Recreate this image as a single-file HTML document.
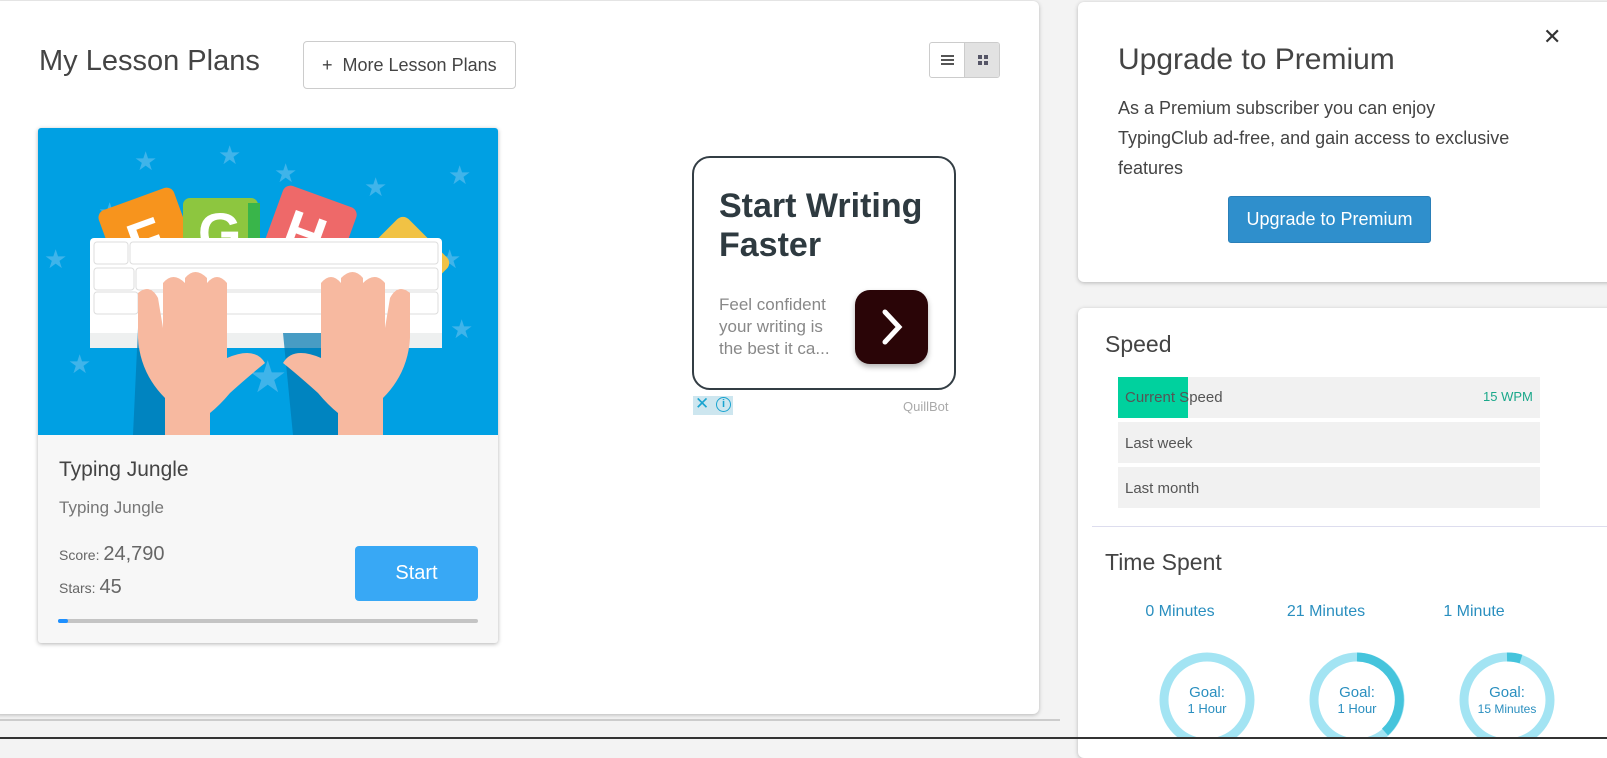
<!DOCTYPE html>
<html><head><meta charset="utf-8"><style>
*{box-sizing:border-box;margin:0;padding:0}
body{width:1607px;height:739px;overflow:hidden;background:#f3f3f3;font-family:"Liberation Sans",Arial,sans-serif;position:relative;color:#444}
.panel{position:absolute;background:#fff;border-radius:6px;box-shadow:0 1px 4px rgba(0,0,0,.25)}
.abs{position:absolute}
</style></head><body>
<div class="panel" style="left:-6px;top:1px;width:1045px;height:713px"></div>
<div class="abs" style="left:39px;top:45px;font-size:29px;color:#444">My Lesson Plans</div>
<div class="abs" style="left:303px;top:41px;width:213px;height:48px;border:1px solid #ccc;border-radius:4px;font-size:18px;color:#444;line-height:46px;padding-left:18px">+&nbsp; More Lesson Plans</div>
<div class="abs" style="left:929px;top:42px;width:71px;height:36px;border:1px solid #ccc;border-radius:3px;overflow:hidden;background:#fff">
 <div class="abs" style="left:34px;top:0;width:37px;height:36px;background:#e2e2e2;border-left:1px solid #ccc"></div>
 <div class="abs" style="left:11px;top:12px;width:13px;height:2px;background:#555;box-shadow:0 4px 0 #555,0 8px 0 #555"></div>
 <div class="abs" style="left:48px;top:12px;width:4px;height:4px;background:#556;box-shadow:6px 0 0 #556,0 6px 0 #556,6px 6px 0 #556"></div>
</div>
<!-- card -->
<div class="abs" style="left:38px;top:128px;width:460px;height:515px;background:#f7f7f7;border-radius:3px;box-shadow:0 1px 4px rgba(0,0,0,.3);overflow:hidden">
<svg width="460" height="307" viewBox="0 0 460 307" style="display:block">
<rect width="460" height="307" fill="#00a0e3"/>
<g fill="#3fb4ea" font-size="26" font-family="DejaVu Sans"><text x="180" y="36">★</text><text x="96" y="42">★</text><text x="236" y="54">★</text><text x="326" y="68">★</text><text x="410" y="56">★</text><text x="60" y="93">★</text><text x="6" y="140">★</text><text x="400" y="140">★</text><text x="412" y="210">★</text><text x="30" y="245">★</text><text x="210" y="264" font-size="44">★</text></g>
<g transform="rotate(-20 105 105)"><rect x="68" y="70" width="80" height="80" rx="8" fill="#f7941d"/><text x="88" y="132" fill="#fff" font-size="56" font-weight="bold">F</text></g>
<rect x="145" y="70" width="75" height="70" rx="7" fill="#8dc63f"/><rect x="210" y="75" width="12" height="65" fill="#39b54a"/><text x="160" y="124" fill="#fff" font-size="56" font-weight="bold">G</text>
<g transform="rotate(20 270 105)"><rect x="232" y="66" width="78" height="78" rx="8" fill="#ee6969"/><text x="247" y="126" fill="#fff" font-size="56" font-weight="bold">H</text></g>
<g transform="rotate(45 365 135)"><rect x="330" y="100" width="70" height="70" rx="8" fill="#f1c244"/></g>
<rect x="52" y="110" width="352" height="110" rx="4" fill="#fff"/><rect x="52" y="205" width="352" height="15" fill="#eef0f0"/>
<g fill="#fff" stroke="#ddd"><rect x="56" y="114" width="34" height="22" rx="3"/><rect x="92" y="114" width="308" height="22" rx="3"/><rect x="56" y="140" width="40" height="22" rx="3"/><rect x="98" y="140" width="302" height="22" rx="3"/><rect x="56" y="164" width="44" height="22" rx="3"/><rect x="102" y="164" width="298" height="22" rx="3"/></g>
<path d="M100 200 L160 200 L165 307 L95 307Z" fill="#0077b0" opacity=".7"/>
<path d="M245 205 L300 205 L312 307 L255 307Z" fill="#0077b0" opacity=".7"/>
<g fill="#f7b9a0"><path d="M100 165 q12-10 20 5 l5 30 v-45 q10-12 22 0 v45 v-50 q10-12 22 0 v50 v-45 q10-12 20 0 v75 q28-12 38 5 q-15 12-35 30 q-10 12-20 20 v75 h-45 v-90 q-25-25-27-60Z"/>
<path d="M372 165 q-12-10-20 5 l-5 30 v-45 q-10-12-22 0 v45 v-50 q-10-12-22 0 v50 v-45 q-10-12-20 0 v75 q-28-12-38 5 q15 12 35 30 q10 12 20 20 v75 h45 v-90 q25-25 27-60Z"/></g>
</svg>
<div class="abs" style="left:21px;top:330px;font-size:21px;color:#444">Typing Jungle</div>
<div class="abs" style="left:21px;top:370px;font-size:17px;color:#777">Typing Jungle</div>
<div class="abs" style="left:21px;top:415px;font-size:14px;color:#666">Score: <span style="font-size:20px">24,790</span></div>
<div class="abs" style="left:21px;top:448px;font-size:14px;color:#666">Stars: <span style="font-size:20px">45</span></div>
<div class="abs" style="left:317px;top:418px;width:123px;height:55px;background:#38a8f5;border-radius:4px;color:#fff;font-size:20px;text-align:center;line-height:54px">Start</div>
<div class="abs" style="left:20px;top:491px;width:420px;height:4px;background:#c4c4c4;border-radius:2px"><div style="width:10px;height:4px;background:#1e90ff;border-radius:2px"></div></div>
</div>
<!-- ad -->
<div class="abs" style="left:692px;top:156px;width:264px;height:234px;border:2px solid #333d44;border-radius:18px;background:#fff"></div>
<div class="abs" style="left:719px;top:187px;font-size:34px;font-weight:bold;color:#2e3a40;line-height:39px">Start Writing<br>Faster</div>
<div class="abs" style="left:719px;top:294px;font-size:17px;color:#888;line-height:22px">Feel confident<br>your writing is<br>the best it ca...</div>
<div class="abs" style="left:855px;top:290px;width:73px;height:74px;background:#2a0507;border-radius:15px;box-shadow:0 3px 6px rgba(0,0,0,.3)"><svg width="73" height="74"><path d="M30 22 L44 37 L30 52" stroke="#fff" stroke-width="5" fill="none" stroke-linecap="round"/></svg></div>
<div class="abs" style="left:693px;top:396px;width:40px;height:19px;background:#cde6ef"></div>
<div class="abs" style="left:695px;top:394px;color:#19a4d0;font-size:17px">✕</div>
<div class="abs" style="left:716px;top:397px;width:15px;height:15px;border:1.5px solid #19a4d0;border-radius:50%;color:#19a4d0;font-size:11px;text-align:center;line-height:12px;font-weight:bold">i</div>
<div class="abs" style="left:903px;top:399px;font-size:13px;color:#aaa">QuillBot</div>
<!-- right top -->
<div class="panel" style="left:1078px;top:2px;width:540px;height:280px"></div>
<div class="abs" style="left:1543px;top:24px;font-size:22px;color:#333">✕</div>
<div class="abs" style="left:1118px;top:43px;font-size:30px;color:#444">Upgrade to Premium</div>
<div class="abs" style="left:1118px;top:93px;font-size:18px;color:#444;line-height:30px;width:405px">As a Premium subscriber you can enjoy TypingClub ad-free, and gain access to exclusive features</div>
<div class="abs" style="left:1228px;top:196px;width:203px;height:47px;background:#2f8fcc;border:1px solid #2a7fb8;border-radius:3px;color:#fff;font-size:18px;text-align:center;line-height:45px">Upgrade to Premium</div>
<!-- right bottom -->
<div class="panel" style="left:1078px;top:308px;width:540px;height:450px"></div>
<div class="abs" style="left:1105px;top:331px;font-size:23px;color:#444">Speed</div>
<div class="abs" style="left:1118px;top:377px;width:422px;height:41px;background:#f1f1f1"><div style="width:70px;height:41px;background:#00d19e"></div></div>
<div class="abs" style="left:1125px;top:389px;font-size:15px;color:#555">Current Speed</div>
<div class="abs" style="left:1483px;top:389px;font-size:13px;color:#1aa88a">15 WPM</div>
<div class="abs" style="left:1118px;top:422px;width:422px;height:41px;background:#f1f1f1;font-size:15px;color:#555;padding:13px 7px">Last week</div>
<div class="abs" style="left:1118px;top:467px;width:422px;height:41px;background:#f1f1f1;font-size:15px;color:#555;padding:13px 7px">Last month</div>
<div class="abs" style="left:1092px;top:526px;width:515px;height:1px;background:#dde"></div>
<div class="abs" style="left:1105px;top:549px;font-size:23px;color:#444">Time Spent</div>
<div class="abs" style="left:1130px;top:603px;width:100px;text-align:center;font-size:16px;color:#2a8fbf">0 Minutes</div>
<div class="abs" style="left:1276px;top:603px;width:100px;text-align:center;font-size:16px;color:#2a8fbf">21 Minutes</div>
<div class="abs" style="left:1424px;top:603px;width:100px;text-align:center;font-size:16px;color:#2a8fbf">1 Minute</div>
<svg class="abs" style="left:1080px;top:630px" width="527" height="109">
<g fill="none" stroke-width="9"><circle cx="127" cy="70" r="43" stroke="#a3e4f3"/><circle cx="277" cy="70" r="43" stroke="#a3e4f3"/><circle cx="427" cy="70" r="43" stroke="#a3e4f3"/>
<path d="M277 27 A43 43 0 0 1 305 102" stroke="#45c4dc"/><path d="M427 27 A43 43 0 0 1 441 29" stroke="#45c4dc"/></g>
<g fill="#2a8fbf" font-family="Liberation Sans" text-anchor="middle"><text x="127" y="67" font-size="15">Goal:</text><text x="127" y="83" font-size="13">1 Hour</text><text x="277" y="67" font-size="15">Goal:</text><text x="277" y="83" font-size="13">1 Hour</text><text x="427" y="67" font-size="15">Goal:</text><text x="427" y="83" font-size="12">15 Minutes</text></g>
</svg>
<div class="abs" style="left:0;top:719px;width:1060px;height:2px;background:#ccc"></div>
<div class="abs" style="left:0;top:737px;width:1607px;height:2px;background:#333"></div>
</body></html>
